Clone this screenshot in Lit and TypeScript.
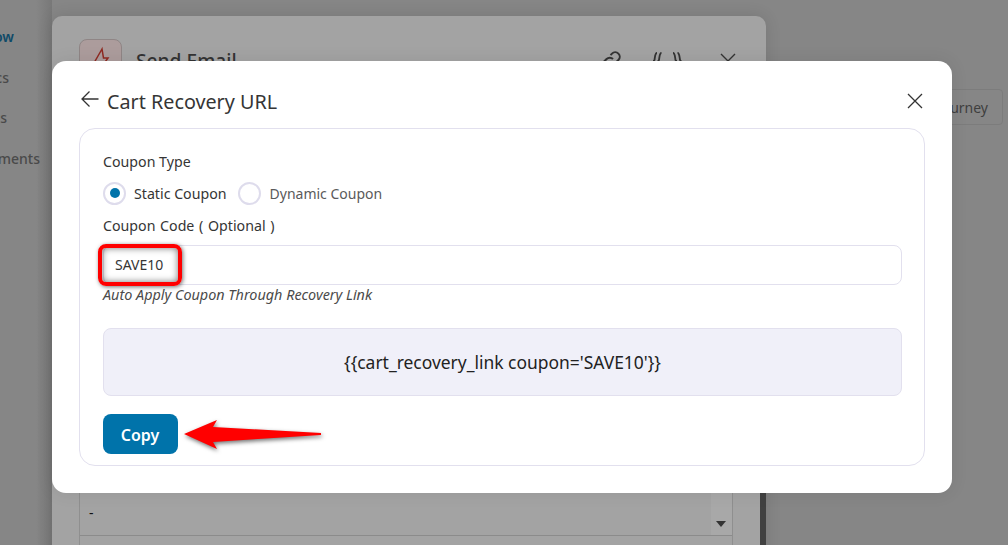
import { LitElement, html, css } from "lit";
import { customElement } from "lit/decorators.js";

@customElement("app-root")
export class AppRoot extends LitElement {
  static styles = css`
    :host { display: block; width: 1008px; height: 545px; position: relative; overflow: hidden; background: #868686; font-family: "Noto Sans", "Open Sans", sans-serif; color: #353535; }
    * { box-sizing: border-box; }
    .nav { position: absolute; left: 0; top: 0; width: 52px; height: 545px; overflow: hidden; background: linear-gradient(90deg,#868686 0,#868686 36px,#787878 52px); }
    .nav span { position: absolute; right: 12px; font-size: 14px; line-height: 20px; font-weight: 500; white-space: nowrap; color: #4a4a4a; }
    .nav .n1 { top: 27px; right: 38px; color: #0f4a68; font-weight: 600; }
    .nav .n2 { top: 68px; right: 43px; }
    .nav .n3 { top: 108px; right: 45px; }
    .nav .n4 { top: 149px; right: 12px; }
    .journey { position: absolute; left: 900px; top: 89px; width: 103px; height: 36px; border: 1px solid #7c7c7c; border-radius: 4px; font-size: 14px; line-height: 36px; text-align: right; padding-right: 14px; color: #3f3f3f; }
    .panel { position: absolute; left: 52px; top: 16px; width: 714px; height: 560px; background: #a3a3a3; border-radius: 10px 10px 0 0; box-shadow: 0 0 16px rgba(0,0,0,.12); }
    .strip { position: absolute; right: 0; top: 100px; bottom: 0; width: 6px; background: #414141; }
    .panel-head { display: flex; align-items: center; padding: 23px 0 0 27px; height: 66px; }
    .bolt { width: 43px; height: 43px; border: 1px solid #8f8585; border-radius: 8px; background: #ac9c9c; display: flex; align-items: center; justify-content: center; }
    .bolt svg { overflow: visible; }
    .panel-title { font-size: 19.2px; font-weight: 500; margin-left: 14px; color: #333; flex: 1; line-height: 26px; }
    .head-icons { display: flex; align-items: center; padding-right: 29px; }
    .ic-link { margin-right: 27px; }
    .ic-brace { margin-right: 35px; }
    .table { position: absolute; left: 27px; top: 476px; width: 654px; height: 100px; border: 1px solid #8f8f8f; border-top: 0; font-size: 14px; color: #111; }
    .row { height: 44px; padding: 11px 0 0 9px; border-bottom: 1px solid #8b8b8b; position: relative; line-height: 20px; }
    .scroll { position: absolute; right: 0; top: 0; bottom: 0; width: 21px; background: #a8a8a8; }
    .caret { position: absolute; right: 6px; bottom: 8px; width: 0; height: 0; border-left: 5px solid transparent; border-right: 5px solid transparent; border-top: 6px solid #333; }
    .modal { position: absolute; left: 52px; top: 61px; width: 900px; height: 432px; background: #fff; border-radius: 14px; padding: 0 27px; display: flex; flex-direction: column; box-shadow: 0 0 18px rgba(0,0,0,.08); }
    .modal-head { height: 67px; display: flex; align-items: center; gap: 7px; padding-top: 14px; }
    .modal-head h2 { margin: 0; font-size: 19.75px; font-weight: 400; color: #353535; flex: 1; line-height: 24px; }
    .back { margin-left: 1px; margin-top: -5px; display: block; }
    .close { margin-right: 1px; margin-top: -2px; display: block; }
    .card { width: 846px; height: 338px; border: 1px solid #e2e0ee; border-radius: 16px; padding: 23px 23px 0; display: flex; flex-direction: column; }
    .label { font-size: 14.2px; line-height: 20px; color: #353535; font-weight: 400; }
    .radios { display: flex; align-items: center; height: 24px; margin-top: 9px; font-size: 14.2px; color: #353535; }
    .radio { width: 23px; height: 23px; border-radius: 50%; border: 2px solid #dedcec; display: flex; align-items: center; justify-content: center; flex: none; }
    .radio i { width: 10px; height: 10px; border-radius: 50%; background: #0073aa; display: block; }
    .radios .s { margin-left: 8px; margin-right: 11px; }
    .radios .d { margin-left: 9px; color: #5a5a5a; font-size: 14px; }
    .code-label { margin-top: 11px; word-spacing: 1px; }
    .input { width: 799px; height: 40px; margin-top: 9px; border: 1px solid #e2e0ee; border-radius: 8px; padding-left: 11px; font-size: 14px; line-height: 38px; color: #353535; position: relative; }
    .mark { position: absolute; left: -6px; top: -2px; width: 84px; height: 42px; border: 4px solid #f00; border-radius: 8px; box-shadow: 1px 1px 4px rgba(0,0,0,.55), inset 0 0 7px rgba(0,0,0,.55); }
    .hint { font-size: 14.4px; font-style: italic; line-height: 20px; color: #4a4a4a; }
    .box { width: 799px; height: 68px; margin-top: 23px; background: #f0f0f9; border: 1px solid #e2e0ee; border-radius: 8px; display: flex; align-items: center; justify-content: center; font-size: 17.45px; color: #222; }
    .copy-row { position: relative; margin-top: 18px; }
    .copy { width: 75px; height: 40px; border: 0; padding: 2px 1px 0 0; border-radius: 8px; background: #0073aa; color: #fff; font: 600 16px "Noto Sans", "Open Sans", sans-serif; display: block; }
    .arrow { position: absolute; left: 78px; top: 0; overflow: visible; filter: drop-shadow(1px 2px 2px rgba(0,0,0,.55)); }
  `;

  render() {
    return html`
      <div class="nav">
        <span class="n1">ow</span><span class="n2">cs</span><span class="n3">ts</span><span class="n4">ments</span>
      </div>
      <div class="journey">urney</div>
      <div class="panel">
        <div class="strip"></div>
        <div class="panel-head">
          <div class="bolt">
            <svg width="18" height="22" viewBox="0 0 18 22" fill="none" stroke="#8f2a22" stroke-width="1.500"><path d="M10 -1 2 13h6L6 22l10-14h-4.500z"/></svg>
          </div>
          <div class="panel-title">Send Email</div>
          <div class="head-icons">
            <svg class="ic-link" width="24" height="24" viewBox="0 0 24 24" fill="none" stroke="#333" stroke-width="2"><path d="M10 14a4.500 4.500 0 0 0 6.400 0l3-3a4.500 4.500 0 0 0-6.400-6.400l-1.500 1.500"/><path d="M14 10a4.500 4.500 0 0 0-6.400 0l-3 3a4.500 4.500 0 0 0 6.400 6.400l1.500-1.500"/></svg>
            <svg class="ic-brace" width="34" height="24" viewBox="0 0 34 24" fill="none" stroke="#333" stroke-width="1.800"><path d="M7 4C5 4 5 8 4.500 11 4 12 3 12 3 12s1 0 1.500 1C5 16 5 20 7 20M11.500 4C9.500 4 9.500 8 9 11 8.500 12 7.500 12 7.500 12s1 0 1.500 1c.5 3 .5 7 2.500 7M23 4c2 0 2 4 2.500 7 .5 1 1.500 1 1.500 1s-1 0-1.500 1C25 16 25 20 23 20M27.500 4c2 0 2 4 2.500 7 .5 1 1.500 1 1.500 1s-1 0-1.500 1c-.5 3-.5 7-2.500 7"/></svg>
            <svg width="18" height="18" viewBox="0 0 18 18" fill="none" stroke="#333" stroke-width="1.400"><path d="M2 2l14 14M16 2 2 16"/></svg>
          </div>
        </div>
        <div class="table">
          <div class="row">-<div class="scroll"><div class="caret"></div></div></div>
        </div>
      </div>
      <div class="modal">
        <div class="modal-head">
          <svg class="back" width="20" height="18" viewBox="0 0 20 18" fill="none" stroke="#333" stroke-width="1.300"><path d="M18.500 9H2M9.500 1.500 2 9l7.500 7.500"/></svg>
          <h2>Cart Recovery URL</h2>
          <svg class="close" width="18" height="18" viewBox="0 0 18 18" fill="none" stroke="#333" stroke-width="1.300"><path d="M2 2l14 14M16 2 2 16"/></svg>
        </div>
        <div class="card">
          <div class="label">Coupon Type</div>
          <div class="radios">
            <span class="radio"><i></i></span><span class="s">Static Coupon</span>
            <span class="radio"></span><span class="d">Dynamic Coupon</span>
          </div>
          <div class="label code-label">Coupon Code ( Optional )</div>
          <div class="input">SAVE10<div class="mark"></div></div>
          <div class="hint">Auto Apply Coupon Through Recovery Link</div>
          <div class="box">{{cart_recovery_link coupon='SAVE10'}}</div>
          <div class="copy-row">
            <button class="copy">Copy</button>
            <svg class="arrow" width="145" height="40" viewBox="0 0 145 40"><path fill="#f00" d="M3 20 36 6 32 13 140 19 140 21 32 28 36 35Z"/></svg>
          </div>
        </div>
      </div>
    `;
  }
}
